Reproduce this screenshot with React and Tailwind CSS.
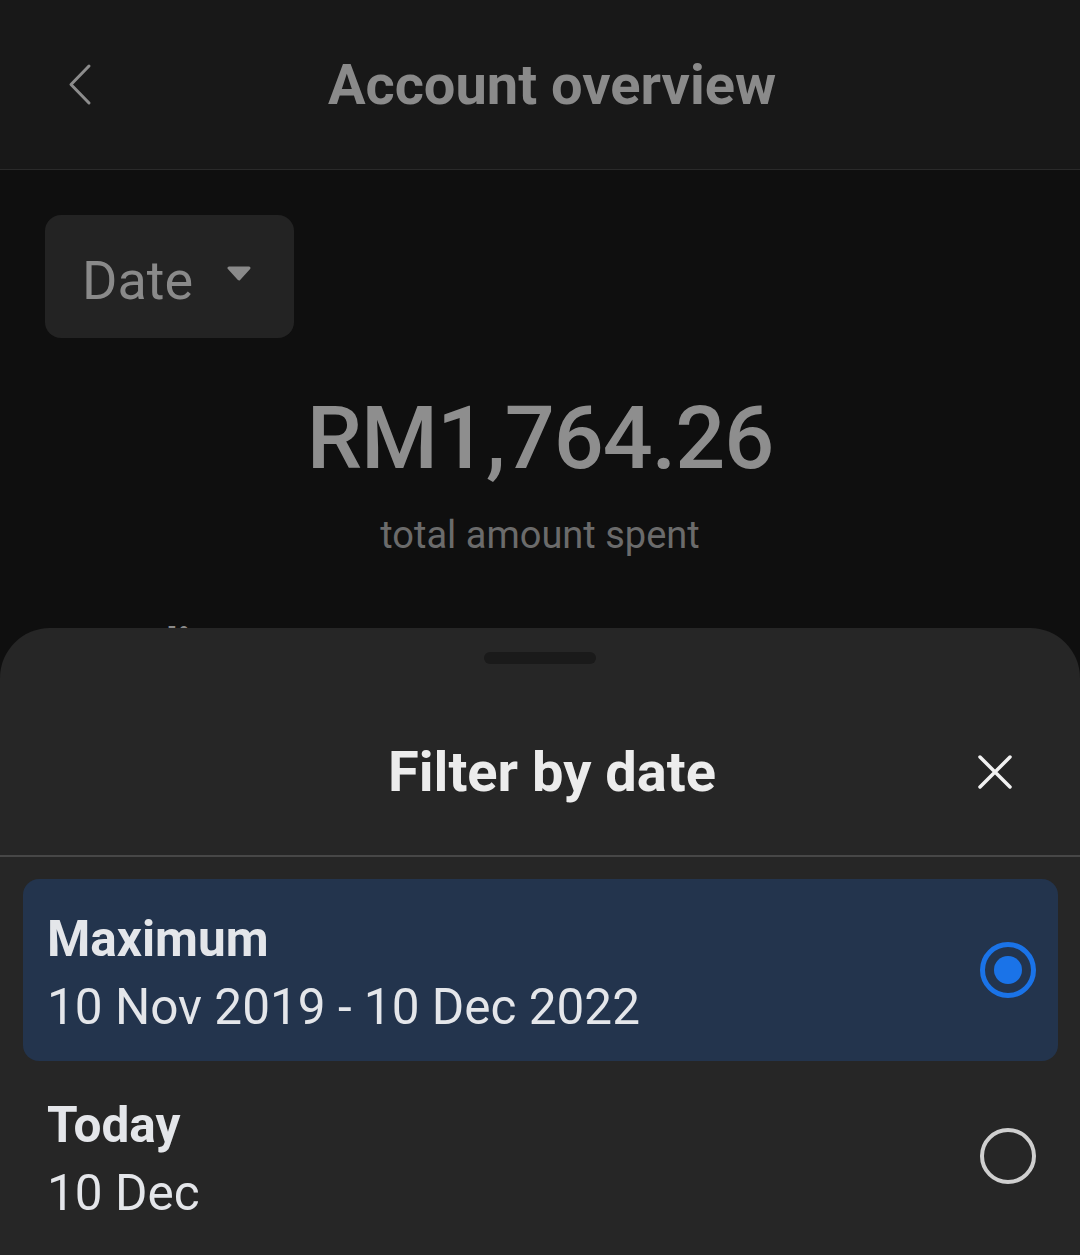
import { useState } from "react";

const OPTIONS = [
  { id: "max", label: "Maximum", range: "10 Nov 2019 - 10 Dec 2022" },
  { id: "today", label: "Today", range: "10 Dec" },
];

function Radio({ checked }) {
  if (checked) {
    return (
      <span className="flex h-[56px] w-[56px] items-center justify-center rounded-full border-[5px] border-[#1a73e8]">
        <span className="h-[28px] w-[28px] rounded-full bg-[#1a73e8]" />
      </span>
    );
  }
  return <span className="block h-[56px] w-[56px] rounded-full border-[4px] border-[#cfcfcf]" />;
}

export default function App() {
  const [selected, setSelected] = useState("max");

  return (
    <div className="relative h-[1255px] w-[1080px] overflow-hidden bg-[#0f0f0f] font-['Roboto',sans-serif]">
      {/* header */}
      <div className="flex h-[170px] items-center border-b border-[#2a2a2a] bg-[#181818]">
        <div className="flex w-[110px] pl-[62px]">
          <svg width="40" height="50" viewBox="0 0 40 50">
            <path d="M27 6 L9 24.5 L27 43" fill="none" stroke="#8c8c8c" strokeWidth="3" strokeLinecap="round" strokeLinejoin="round" />
          </svg>
        </div>
        <h1 className="flex-1 text-center text-[56px] font-bold leading-[60px] text-[#8a8a8a]">Account overview</h1>
        <div className="w-[86px]" />
      </div>

      {/* body */}
      <div className="px-[45px] pt-[45px]">
        <button
          type="button"
          className="flex h-[123px] w-[249px] items-center rounded-[16px] bg-[#232323] pl-[37px] pr-[42px]"
        >
          <span className="mt-[8px] text-[54px] leading-[60px] text-[#8a8a8a]">Date</span>
          <svg width="26" height="15" viewBox="0 0 26 15" className="ml-auto mt-[-6px]">
            <path d="M3 2 L23 2 L13 13 Z" fill="#8a8a8a" stroke="#8a8a8a" strokeWidth="3" strokeLinejoin="round" />
          </svg>
        </button>

        <div className="mt-[55px] flex flex-col items-center">
          <div className="text-[88px] font-medium leading-[90px] tracking-[-1px] text-[#8e8e8e]">RM1,764.26</div>
          <div className="mt-[30px] text-[38px] leading-[44px] text-[#6b6b6b]">total amount spent</div>
        </div>

        <div className="mt-[63px] pl-[2px] text-[46px] font-bold leading-[50px] text-[#8a8a8a]">Spending</div>
      </div>

      {/* bottom sheet */}
      <div className="absolute inset-x-0 top-[628px] bottom-0 rounded-t-[50px] bg-[#262626]">
        <div className="flex justify-center pt-[24px]">
          <div className="h-[12px] w-[112px] rounded-full bg-[#1a1a1a]" />
        </div>

        <div className="flex h-[191px] items-center pt-[24px]">
          <div className="w-[194px]" />
          <h2 className="flex-1 text-center text-[56px] font-bold leading-[60px] text-[#ececec]">Filter by date</h2>
          <div className="flex w-[170px] justify-center">
            <svg width="34" height="34" viewBox="0 0 34 34">
              <path d="M2 2 L32 32 M32 2 L2 32" stroke="#f2f2f2" strokeWidth="3.5" strokeLinecap="round" />
            </svg>
          </div>
        </div>

        <div className="h-[2px] bg-[#474747]" />

        <div className="mt-[22px] flex flex-col gap-[4px] pl-[23px] pr-[22px]">
          {OPTIONS.map((opt) => {
            const active = selected === opt.id;
            return (
              <button
                key={opt.id}
                type="button"
                onClick={() => setSelected(opt.id)}
                className={`flex h-[182px] items-center justify-between rounded-[16px] pl-[24px] pr-[22px] text-left ${
                  active ? "bg-[#23344d]" : "bg-transparent"
                }`}
              >
                <div className="mt-[6px] text-[#e4e6ea]">
                  <div className="text-[49.5px] font-bold leading-[68px]">{opt.label}</div>
                  <div className="text-[49.5px] leading-[68px]">{opt.range}</div>
                </div>
                <Radio checked={active} />
              </button>
            );
          })}
        </div>
      </div>
    </div>
  );
}
